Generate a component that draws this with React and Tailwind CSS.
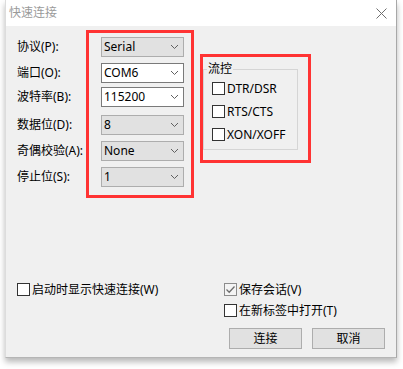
import React from 'react';

const FONT = "font-['Noto_Sans','Noto_Sans_CJK_SC',sans-serif]";

// label, value, editable combobox?, gap above the row
const fields = [
  { label: '协议(P):', value: 'Serial', editable: false, gap: 'mt-0' },
  { label: '端口(O):', value: 'COM6', editable: true, gap: 'mt-[6px]' },
  { label: '波特率(B):', value: '115200', editable: true, gap: 'mt-[4px]' },
  { label: '数据位(D):', value: '8', editable: false, gap: 'mt-[8px]' },
  { label: '奇偶校验(A):', value: 'None', editable: false, gap: 'mt-[6px]' },
  { label: '停止位(S):', value: '1', editable: false, gap: 'mt-[6px]' },
];

const flowItems = ['DTR/DSR', 'RTS/CTS', 'XON/XOFF'];

const Chevron = () => (
  <svg width="9" height="6" viewBox="0 0 9 6" className="shrink-0">
    <polyline points="1,1 4.5,4.5 8,1" fill="none" stroke="#606060" strokeWidth="1" />
  </svg>
);

const Select = ({ value, editable, gap }) => (
  <div
    className={`${gap} h-[20px] w-[83px] flex items-center justify-between pl-[2px] pr-[4px] border ${
      editable ? 'bg-white border-[#7a7a7a]' : 'bg-[#e1e1e1] border-[#adadad]'
    }`}
  >
    <span className="text-[12px] leading-none text-black">{value}</span>
    <Chevron />
  </div>
);

const Checkbox = ({ checked, disabled }) => (
  <div
    className={`w-[13px] h-[13px] shrink-0 border flex items-center justify-center ${
      disabled ? 'border-[#8c8c8c] bg-[#f4f4f4]' : 'border-[#333] bg-white'
    }`}
  >
    {checked && (
      <svg width="11" height="11" viewBox="0 0 11 11">
        <polyline points="1.5,5.5 4.2,8.2 9.5,2.5" fill="none" stroke="#6d6d6d" strokeWidth="1.3" />
      </svg>
    )}
  </div>
);

const CheckRow = ({ label, checked, disabled, className = '' }) => (
  <div className={`flex items-center gap-[2px] ${className}`}>
    <Checkbox checked={checked} disabled={disabled} />
    <span className="text-[12px] leading-none text-black">{label}</span>
  </div>
);

export default function App() {
  return (
    <div className={`w-[403px] h-[369px] bg-white overflow-hidden ${FONT}`}>
      <div className="ml-[5px] w-[392px] border-l border-r border-b border-l-[#dcdcdc] border-r-[#a8a8a8] border-b-[#b5b5b5] shadow-[0_4px_6px_rgba(0,0,0,0.28)]">
        {/* title bar */}
        <div className="h-[26px] bg-white flex items-center justify-between pl-[3px] pr-[9px]">
          <span className="text-[12px] text-[#9a9a9a] leading-none">快速连接</span>
          <svg width="11" height="11" viewBox="0 0 11 11">
            <path d="M0.5 0.5 L10.5 10.5 M10.5 0.5 L0.5 10.5" stroke="#6e6e6e" strokeWidth="1" />
          </svg>
        </div>

        {/* body */}
        <div className="h-[331px] bg-[#f0f0f0] flex flex-col">
          <div className="flex items-start pt-[4px] pl-[11px]">
            {/* labels */}
            <div className="w-[69px] pt-[7px] flex flex-col">
              {fields.map((f) => (
                <div key={f.label} className={`${f.gap} h-[20px] flex items-center text-[12px] text-black`}>
                  {f.label}
                </div>
              ))}
            </div>

            {/* highlighted combos */}
            <div className="w-[108px] border-[3px] border-[#ff3333] pt-[4px] pb-[8px] pl-[12px] flex flex-col">
              {fields.map((f) => (
                <Select key={f.label} value={f.value} editable={f.editable} gap={f.gap} />
              ))}
            </div>

            {/* flow control */}
            <div className="ml-[6px] mt-[24px] w-[111px] h-[109px] border-[3px] border-[#ff3333] pt-[12px] pr-[10px]">
              <div className="relative h-[81px] border border-[#d5d5d5]">
                <span className="absolute -top-[7px] left-[3px] px-[1px] bg-[#f0f0f0] text-[12px] leading-none text-black">
                  流控
                </span>
                <div className="pl-[8px] pt-[12px] flex flex-col gap-[10px]">
                  {flowItems.map((t) => (
                    <CheckRow key={t} label={t} />
                  ))}
                </div>
              </div>
            </div>
          </div>

          {/* options */}
          <div className="mt-[85px] flex items-start pl-[11px]">
            <CheckRow label="启动时显示快速连接(W)" className="w-[207px]" />
            <div className="flex flex-col gap-[8px]">
              <CheckRow label="保存会话(V)" checked disabled />
              <CheckRow label="在新标签中打开(T)" />
            </div>
          </div>

          {/* buttons */}
          <div className="mt-[11px] flex pl-[223px] gap-[10px]">
            <button className="w-[73px] h-[21px] bg-[#e1e1e1] border border-[#adadad] text-[12px] text-black leading-none">
              连接
            </button>
            <button className="w-[73px] h-[21px] bg-[#e1e1e1] border border-[#adadad] text-[12px] text-black leading-none">
              取消
            </button>
          </div>
        </div>
      </div>
    </div>
  );
}
